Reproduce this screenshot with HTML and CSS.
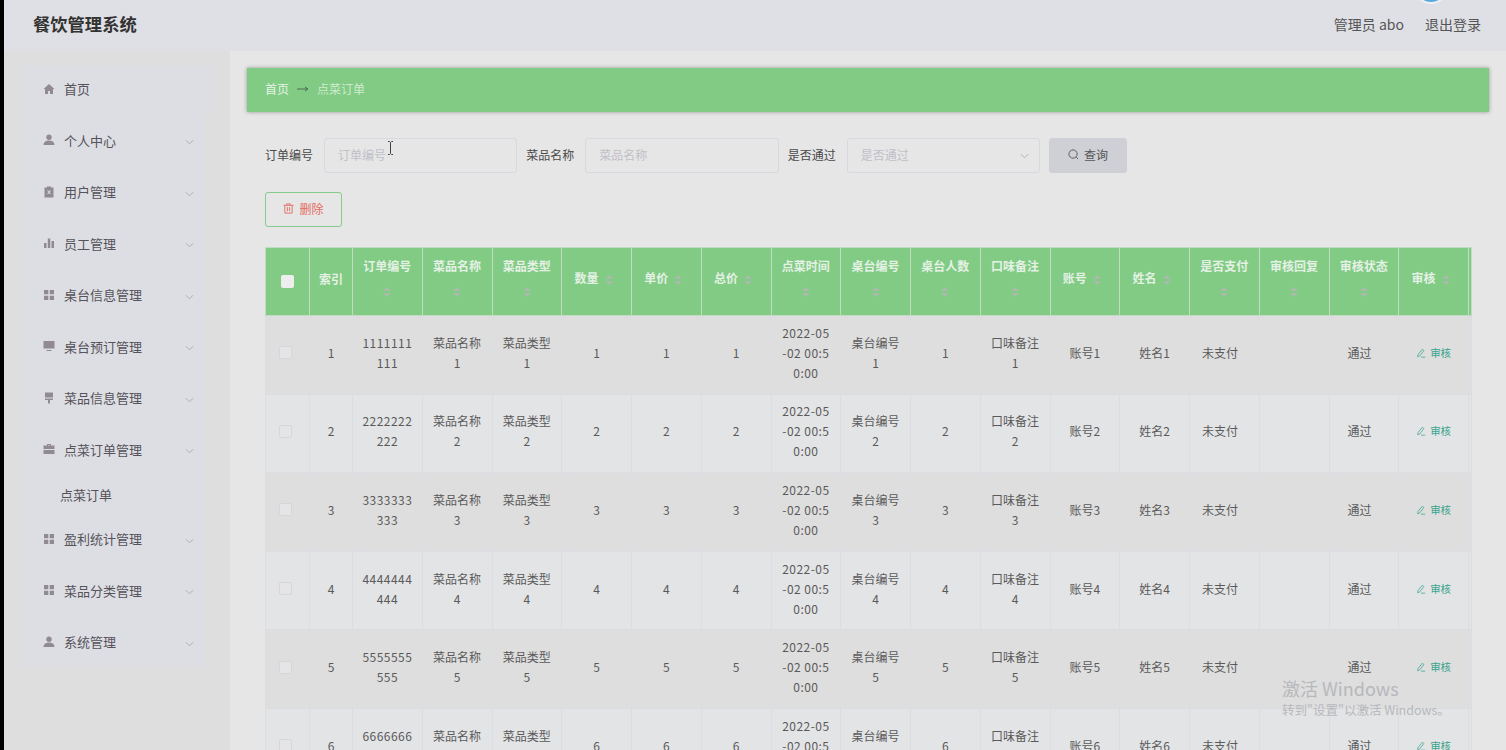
FILE: index.html
```html
<!DOCTYPE html>
<html lang="zh-CN">
<head>
<meta charset="utf-8">
<title>餐饮管理系统</title>
<link rel="stylesheet" href="styles.css">
</head>
<body>
<div class="app">
  <header class="topbar">
    <div class="brand">餐饮管理系统</div>
    <div class="avatar"></div>
    <div class="user"><span>管理员 abo</span><span>退出登录</span></div>
  </header>
  <div class="body">
    <aside class="side">
      <nav class="menu">
        <a class="item first"><svg class="ico" viewBox="0 0 12 12"><path d="M6 1 .5 6H2v5h3V8h2v3h3V6h1.500z"/></svg>首页</a>
        <a class="item"><svg class="ico" viewBox="0 0 12 12"><circle cx="6" cy="3.200" r="2.700"/><path d="M.5 11c0-3 2-4.500 5.500-4.500s5.500 1.500 5.500 4.500z"/></svg>个人中心<svg class="chev" viewBox="0 0 10 6"><path d="M1 1l4 4 4-4"/></svg></a>
        <a class="item"><svg class="ico" viewBox="0 0 12 12"><path fill-rule="evenodd" d="M1.500 1.500H4V.5h4v1h2.500V11.500h-9zM4.200 4.800l1.300 1.400-1.300 1.400.7.700L6 7l1.100 1.300.7-.7-1.300-1.400 1.300-1.400-.7-.7L6 5.400 4.900 4.100z"/></svg>用户管理<svg class="chev" viewBox="0 0 10 6"><path d="M1 1l4 4 4-4"/></svg></a>
        <a class="item"><svg class="ico" viewBox="0 0 12 12"><path d="M1 6h2.500v5H1zM4.800 1.500h2.500V11H4.800zM8.500 4H11v7H8.500z"/></svg>员工管理<svg class="chev" viewBox="0 0 10 6"><path d="M1 1l4 4 4-4"/></svg></a>
        <a class="item"><svg class="ico" viewBox="0 0 12 12"><path d="M1 1h4.300v4.300H1zM6.700 1H11v4.300H6.700zM1 6.700h4.300V11H1zM6.700 6.700H11V11H6.700z"/></svg>桌台信息管理<svg class="chev" viewBox="0 0 10 6"><path d="M1 1l4 4 4-4"/></svg></a>
        <a class="item"><svg class="ico" viewBox="0 0 12 12"><path d="M.5 1h11v7.500H.5zM3.500 10h5v1h-5z"/></svg>桌台预订管理<svg class="chev" viewBox="0 0 10 6"><path d="M1 1l4 4 4-4"/></svg></a>
        <a class="item"><svg class="ico" viewBox="0 0 12 12"><path d="M2 .5h8v5H2zM2 6.500h8V8H7v3.500H5V8H2z"/></svg>菜品信息管理<svg class="chev" viewBox="0 0 10 6"><path d="M1 1l4 4 4-4"/></svg></a>
        <a class="item"><svg class="ico" viewBox="0 0 12 12"><path d="M4 1h4v1.500h3.500V6H.5V2.500H4zM5 2v.5h2V2zM.5 7h11v4H.5z"/></svg>点菜订单管理<svg class="chev" viewBox="0 0 10 6"><path d="M1 1l4 4 4-4"/></svg></a>
        <a class="sub">点菜订单</a>
        <a class="item"><svg class="ico" viewBox="0 0 12 12"><path d="M1 1h4.300v4.300H1zM6.700 1H11v4.300H6.700zM1 6.700h4.300V11H1zM6.700 6.700H11V11H6.700z"/></svg>盈利统计管理<svg class="chev" viewBox="0 0 10 6"><path d="M1 1l4 4 4-4"/></svg></a>
        <a class="item"><svg class="ico" viewBox="0 0 12 12"><path d="M1 1h4.300v4.300H1zM6.700 1H11v4.300H6.700zM1 6.700h4.300V11H1zM6.700 6.700H11V11H6.700z"/></svg>菜品分类管理<svg class="chev" viewBox="0 0 10 6"><path d="M1 1l4 4 4-4"/></svg></a>
        <a class="item"><svg class="ico" viewBox="0 0 12 12"><circle cx="6" cy="3.200" r="2.700"/><path d="M.5 11c0-3 2-4.500 5.500-4.500s5.500 1.500 5.500 4.500z"/></svg>系统管理<svg class="chev" viewBox="0 0 10 6"><path d="M1 1l4 4 4-4"/></svg></a>
      </nav>
    </aside>
    <main class="main">
      <div class="crumb"><span>首页</span><svg class="arrow" viewBox="0 0 12 6"><path d="M0 3h10M8 1l3 2-3 2"/></svg><span class="crumb-now">点菜订单</span></div>
      <form class="filters">
        <label class="lbl">订单编号</label>
        <div class="field">订单编号</div>
        <label class="lbl">菜品名称</label>
        <div class="field">菜品名称</div>
        <label class="lbl">是否通过</label>
        <div class="field select">是否通过<svg class="chev" viewBox="0 0 10 6"><path d="M1 1l4 4 4-4"/></svg></div>
        <button type="button" class="search"><svg class="sico" viewBox="0 0 12 12"><circle cx="5.500" cy="5.500" r="4.500"/><path d="M9 9l2 2"/></svg>查询</button>
      </form>
      <button type="button" class="del"><svg class="dico" viewBox="0 0 12 12"><path d="M.5 2.500h11M4 2.500V1h4v1.500M2 2.500V11h8V2.500M4.800 4.500v4.500M7.200 4.500v4.500"/></svg>删除</button>
      <table class="grid">
        <thead><tr id="head"></tr></thead>
        <tbody id="rows"></tbody>
      </table>
    </main>
  </div>
  <div class="watermark"><div class="wm1">激活 Windows</div><div class="wm2">转到"设置"以激活 Windows。</div></div>
  <svg class="cursor" viewBox="0 0 7 14"><path d="M1 .5h1.500L3.500 1.500 4.500.5H6M3.500 1.500v11M1 13.500h1.500l1-1 1 1H6"/></svg>
</div>
<script src="app.js"></script>
</body>
</html>
```
FILE: app.js
```js
var heads = ['索引','订单编号','菜品名称','菜品类型','数量','单价','总价','点菜时间','桌台编号','桌台人数','口味备注','账号','姓名','是否支付','审核回复','审核状态','审核'];
var caret = '<i class="sort"><b class="up"></b><b class="down"></b></i>';
var h = '<th><span class="hbox"></span></th>';
heads.forEach(function (t, i) {
  h += '<th>' + t + (i === 0 ? '' : caret) + '</th>';
});
h += '<th></th>';
document.getElementById('head').innerHTML = h;
var out = '';
for (var n = 1; n <= 6; n++) {
  var id = String(n).repeat(10);
  var cells = [n, id, '菜品名称' + n, '菜品类型' + n, n, n, n, '2022-05-02 00:50:00', '桌台编号' + n, n, '口味备注' + n, '账号' + n, '姓名' + n];
  var r = '<td><span class="box"></span></td>';
  cells.forEach(function (c, i) { r += '<td' + (i === 1 || i === 7 ? ' class="num"' : '') + '>' + c + '</td>'; });
  r += '<td class="pay">未支付</td><td></td><td class="pass">通过</td>';
  r += '<td><a class="audit"><svg viewBox="0 0 12 12"><path d="M7.500 1.500l2 1.500-5 6.500-2.500 1 .3-2.500zM6 11h5"/></svg>审核</a></td><td></td>';
  out += '<tr>' + r + '</tr>';
}
document.getElementById('rows').innerHTML = out;
```
FILE: styles.css
```css
* { box-sizing: border-box; }
html, body { margin: 0; height: 100%; overflow: hidden; }
body {
  background: #000;
  font-family: "Noto Sans CJK SC", "Liberation Sans", sans-serif;
  font-size: 12px;
  color: #555;
}
.app { margin-left: 4px; height: 750px; display: flex; flex-direction: column; background: #e6e6e6; overflow: hidden; }

.topbar { height: 51px; flex: none; background: #dfe0e5; display: flex; align-items: center; justify-content: space-between; padding: 0 25px 4px 29px; }
.brand { font-size: 17.300px; font-weight: 700; color: #333; }
.user { display: flex; gap: 21px; font-size: 14px; color: #555; }
.avatar { position: absolute; left: 1413px; top: -32px; width: 36px; height: 36px; border-radius: 50%; background: #5aa7de; border: 2px solid #eef0f3; }

.body { flex: 1; display: flex; min-height: 0; }
.side { width: 226px; flex: none; background: #dedede; padding: 14px 0 0 17px; }
.menu { width: 183px; height: 602px; background: #dddee3; display: flex; flex-direction: column; font-size: 13px; color: #55525a; }
.item { height: 51.500px; flex: none; display: flex; align-items: center; padding: 0 0 3px 22px; position: relative; }
.first { width: 192px; height: 50px; background: #dddee3; margin-bottom: 1px; }
.sub { height: 39px; flex: none; display: flex; align-items: center; padding: 0 0 3px 39px; margin-bottom: -1px; }
.ico { width: 12px; height: 12px; margin-right: 9px; fill: #928a92; flex: none; }
.chev { position: absolute; width: 9px; height: 6px; fill: none; stroke: #a9a9ae; stroke-width: 1; }
.item .chev { left: 164px; top: 23px; }

.main { flex: 1; min-width: 0; padding: 17px 17px 0; }
.crumb { height: 44px; background: #81cb85; box-shadow: 0 0 4px rgba(0,0,0,.35); display: flex; align-items: center; padding: 0 0 3px 18px; color: #e8f3e8; }
.crumb-now { color: #cfeacf; }
.arrow { width: 12px; height: 6px; margin: 0 8px; fill: none; stroke: #4c6f50; stroke-width: 1; }

.filters { display: flex; align-items: center; height: 36px; margin: 25px 0 0 18px; }
.lbl { color: #4a4a4a; margin-right: 11px; padding-bottom: 1px; }
.field { width: 193.300px; height: 35px; border: 1px solid #d7d8e0; border-radius: 3px; color: #c0c0c6; padding: 0 13px 2px; display: flex; align-items: center; margin-right: 9px; position: relative; }
.select .chev { right: 10px; top: 14px; }
.search { width: 78px; height: 35px; border: 0; border-radius: 3px; background: #cfd0d5; color: #555; font: inherit; padding: 0 0 2px; display: flex; align-items: center; justify-content: center; }
.sico { width: 11px; height: 11px; margin-right: 5px; fill: none; stroke: #555; stroke-width: 1; }

.del { display: flex; align-items: center; justify-content: center; width: 77px; height: 35px; padding: 0 0 2px; margin: 19px 0 20px 18px; background: transparent; border: 1px solid #85cc8a; border-radius: 3px; color: #e56a62; font: inherit; }
.dico { width: 11px; height: 11px; margin-right: 5px; fill: none; stroke: #e56a62; stroke-width: 1; }

.grid { margin-left: 18px; width: 1206px; border-collapse: collapse; table-layout: fixed; text-align: center; }
.grid th, .grid td { border: 1px solid #dcdde3; padding: 0 10px 4px; word-break: break-all; }
.grid th { height: 68px; background: #81cb85; border-color: #c2dcc4; color: #e4f1e4; font-weight: 700; line-height: 24px; padding: 0 9px 7px; }
.grid td { height: 78.600px; color: #5a5a5a; line-height: 20px; background: #e3e4e6; }
.grid tbody tr:nth-child(odd) td { background: #dedede; }
.grid th:nth-child(1) { width: 44px; padding: 0; }
.grid th:nth-child(2) { width: 43px; padding: 0 0 5px; }
.grid th:nth-child(n+3) { width: 69.750px; }
.grid th:last-child { width: 3px; padding: 0; }
.grid td:last-child { padding: 0; }
.grid td.pay { text-align: left; padding-left: 12px; }
.grid td.pass { text-align: left; padding-left: 18px; }
.grid td.num { letter-spacing: .45px; padding-left: 9px; padding-right: 9px; }
.sort { display: inline-block; vertical-align: middle; width: 20px; height: 12px; position: relative; }
.sort b { position: absolute; left: 6px; width: 0; height: 0; border: 4px solid transparent; }
.sort .up { top: -3px; border-bottom-color: #a9bcab; }
.sort .down { bottom: -3px; border-top-color: #a9bcab; }
.hbox { display: block; width: 13px; height: 13px; background: #eeeeee; border-radius: 2px; margin: 0 auto; }
.box { display: block; width: 13px; height: 13px; background: #e5e5e7; border: 1px solid #d6d6db; border-radius: 2px; margin: 0 0 0 3px; }
.audit { color: #3aa48d; font-size: 10.500px; white-space: nowrap; display: inline-flex; align-items: center; }
.audit svg { width: 10px; height: 10px; margin-right: 4px; fill: none; stroke: #3aa48d; stroke-width: .9; }

.watermark { position: absolute; left: 1282px; top: 676px; color: #b7b8bb; }
.wm1 { font-size: 18px; line-height: 24px; }
.wm2 { font-size: 12.500px; line-height: 19px; }
.cursor { position: absolute; left: 387px; top: 141px; width: 7px; height: 14px; fill: none; stroke: #444; stroke-width: 1; }
```
